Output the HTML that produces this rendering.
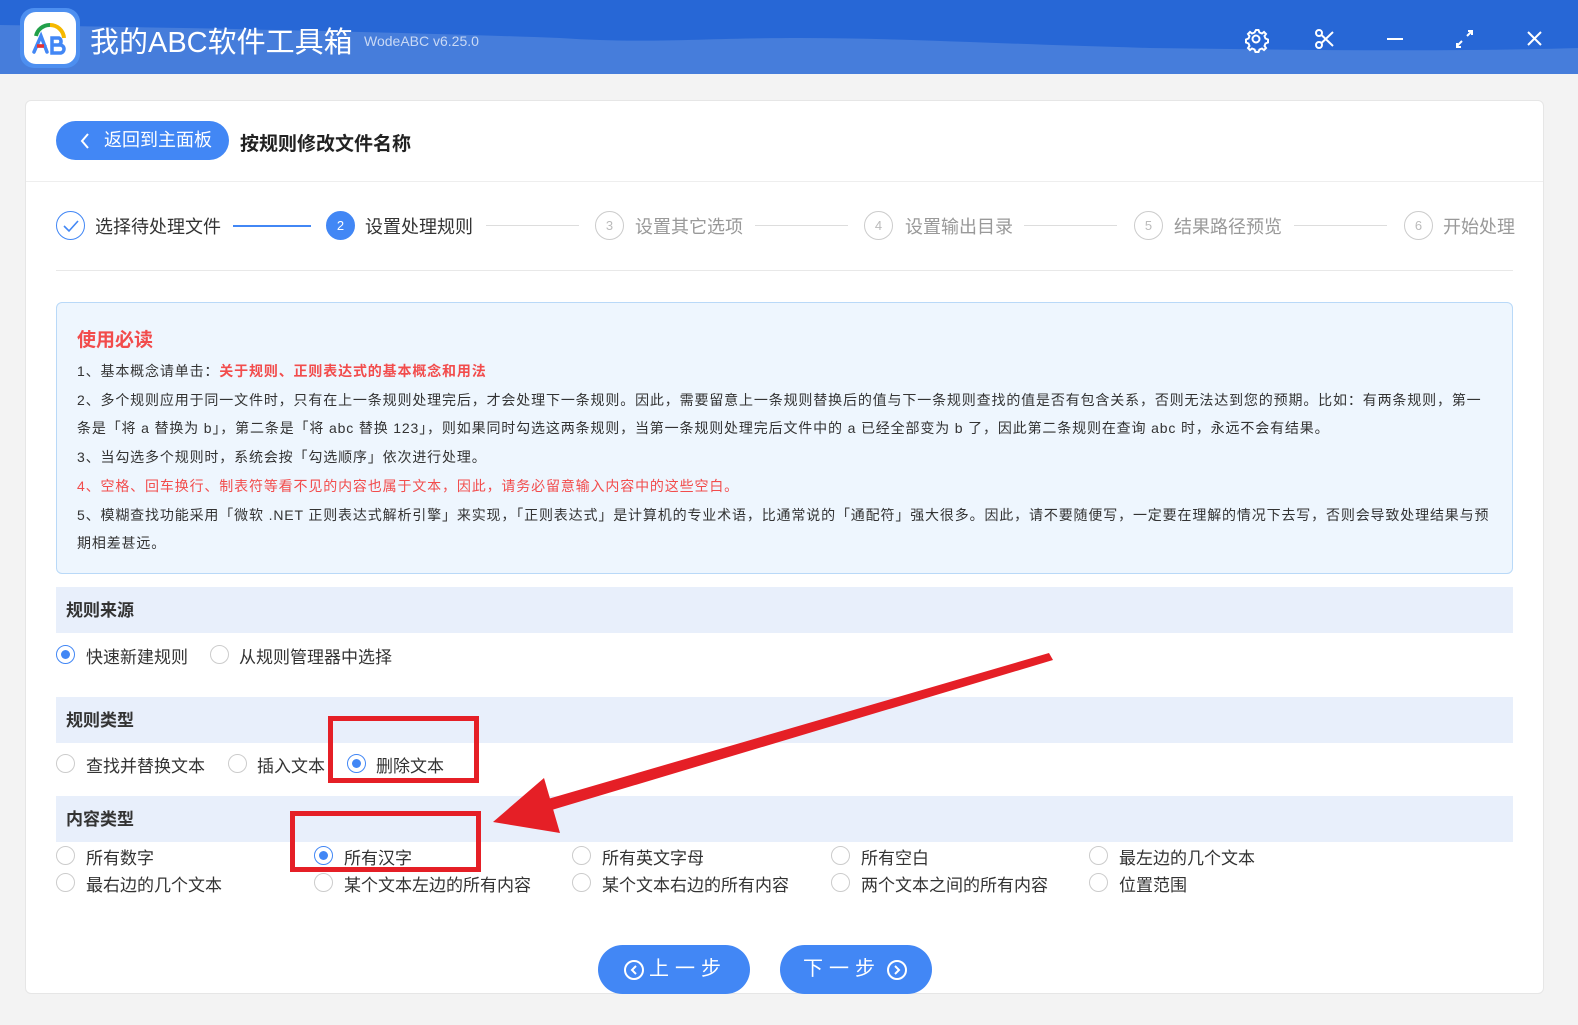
<!DOCTYPE html>
<html><head><meta charset="utf-8">
<style>
*{margin:0;padding:0;box-sizing:border-box}
body{width:1578px;height:1025px;background:#f3f3f3;font-family:"Liberation Sans","Noto Sans CJK SC",sans-serif;position:relative;overflow:hidden;color:#333}
.a{position:absolute;white-space:nowrap}
.card{position:absolute;left:25px;top:100px;width:1519px;height:894px;background:#fff;border:1px solid #e6e6e6;border-radius:6px}
.step{font-size:18px;color:#999}
.circ{position:absolute;width:29px;height:29px;border-radius:50%;border:1px solid #ccc;color:#bbb;font-size:13px;text-align:center;line-height:27px}
.note{position:absolute;left:56px;top:302px;width:1457px;height:272px;background:#eef6fe;border:1px solid #b9d9f8;border-radius:6px}
.nl{position:absolute;left:20px;font-size:14px;color:#333;white-space:nowrap;letter-spacing:0.85px}
.bar{position:absolute;left:56px;width:1457px;height:46px;background:#e8effb;font-size:17px;font-weight:bold;color:#333;padding-left:10px;line-height:48px}
.r{position:absolute;width:19px;height:19px;border-radius:50%;border:1px solid #ccc;background:#fff}
.r.on{border-color:#4287f5}
.r.on:after{content:"";position:absolute;left:4px;top:4px;width:9px;height:9px;border-radius:50%;background:#4287f5}
.rt{position:absolute;font-size:17px;color:#333;white-space:nowrap}
.btn{position:absolute;top:945px;height:49px;width:152px;border-radius:25px;background:#4287f5;color:#fff;font-size:20px;line-height:49px;text-align:center;letter-spacing:6px}
.box{position:absolute;border:5px solid #e51f26}
</style></head><body>
<svg class="a" style="left:0;top:0" width="1578" height="74">
<rect width="1578" height="74" fill="#467ddb"/>
<path d="M0 0 H1578 V48 C1450 52 1300 50 1150 48 C1000 44 900 38 800 38 C700 38 650 44 560 38 C400 32 200 28 0 25 Z" fill="#2767d6"/>
</svg>
<div class="a" style="left:20px;top:8px;width:60px;height:60px;border-radius:14px;background:#4d8ff0"></div>
<div class="a" style="left:24px;top:12px;width:52px;height:52px;border-radius:12px;background:#fff"></div>
<svg class="a" style="left:24px;top:12px" width="52" height="52" viewBox="0 0 52 52">
<path d="M12 24 A14 14 0 0 1 26 13" stroke="#22a04a" stroke-width="4" fill="none"/>
<path d="M26 13 A14 14 0 0 1 40 26" stroke="#f5b800" stroke-width="4" fill="none"/>
<path d="M10 40 L17 24 L23 40 M13 34 H21" stroke="#4287f5" stroke-width="3.5" fill="none" stroke-linecap="round"/>
<path d="M13 34 H20" stroke="#e8302f" stroke-width="3.5"/>
<path d="M28 26 H35 a4 4 0 0 1 0 7 H28 Z M28 33 H36 a4 4 0 0 1 0 8 H28 Z" stroke="#4287f5" stroke-width="3.5" fill="none"/>
</svg>
<div class="a" style="left:90px;top:19px;font-size:29px;color:#fff">我的ABC软件工具箱</div>
<div class="a" style="left:364px;top:33px;font-size:14px;color:#c9d9f5">WodeABC v6.25.0</div>
<svg class="a" style="left:1240px;top:24px" width="310" height="30" viewBox="0 0 310 30" fill="none" stroke="#fff" stroke-width="2">
<circle cx="16" cy="15" r="3.5"/><path d="M16 6 l2.5 0 1 2.5 2.5 1 2-1.5 2 2-1.5 2 1 2.5 2.5 1 0 3-2.5 1-1 2.5 1.5 2-2 2-2-1.5-2.5 1-1 2.5h-3l-1-2.5-2.5-1-2 1.5-2-2 1.5-2-1-2.5-2.5-1v-3l2.5-1 1-2.5-1.5-2 2-2 2 1.5 2.5-1z"/>
<circle cx="79" cy="21" r="3"/><circle cx="79" cy="9" r="3"/><path d="M81.5 19 L93 8 M81.5 11 L93 22"/>
<path d="M147 15 H163"/>
<path d="M217 22 l5-5 M227 12 l5-5 M228 7 h4 v4 M221 23 h-4 v-4"/>
<path d="M288 8 l13 13 M301 8 l-13 13"/>
</svg>
<div class="card"></div>
<div class="a" style="left:56px;top:121px;width:173px;height:39px;border-radius:20px;background:#4287f5;color:#fff;font-size:18px;line-height:39px;padding-left:48px">返回到主面板</div>
<svg class="a" style="left:79px;top:132px" width="12" height="18"><path d="M9 2 L3 9 L9 16" stroke="#fff" stroke-width="2" fill="none"/></svg>
<div class="a" style="left:240px;top:129px;font-size:19px;font-weight:bold;color:#222">按规则修改文件名称</div>
<div class="a" style="left:26px;top:181px;width:1517px;height:1px;background:#eee"></div>
<div class="circ" style="left:56px;top:211px;border-color:#4287f5"></div>
<svg class="a" style="left:62px;top:218px" width="18" height="16"><path d="M2 8 L7 13 L16 3" stroke="#4287f5" stroke-width="1.6" fill="none"/></svg>
<div class="a step" style="left:95px;top:213px;color:#333">选择待处理文件</div>
<div class="a" style="left:233px;top:225px;width:78px;height:2px;background:#4287f5"></div>
<div class="circ" style="left:326px;top:211px;background:#4287f5;border-color:#4287f5;color:#fff">2</div>
<div class="a step" style="left:365px;top:213px;color:#333">设置处理规则</div>
<div class="a" style="left:486px;top:225px;width:93px;height:1px;background:#ddd"></div>
<div class="circ" style="left:595px;top:211px">3</div>
<div class="a step" style="left:635px;top:213px">设置其它选项</div>
<div class="a" style="left:755px;top:225px;width:93px;height:1px;background:#ddd"></div>
<div class="circ" style="left:864px;top:211px">4</div>
<div class="a step" style="left:905px;top:213px">设置输出目录</div>
<div class="a" style="left:1024px;top:225px;width:93px;height:1px;background:#ddd"></div>
<div class="circ" style="left:1134px;top:211px">5</div>
<div class="a step" style="left:1174px;top:213px">结果路径预览</div>
<div class="a" style="left:1294px;top:225px;width:93px;height:1px;background:#ddd"></div>
<div class="circ" style="left:1404px;top:211px">6</div>
<div class="a step" style="left:1443px;top:213px">开始处理</div>
<div class="a" style="left:56px;top:270px;width:1457px;height:1px;background:#e8e8e8"></div>
<div class="note">
<div class="nl" style="top:22px;font-size:19px;font-weight:bold;color:#f24c4c;letter-spacing:0">使用必读</div>
<div class="nl" style="top:58px">1、基本概念请单击：<span style="color:#f24c4c;font-weight:bold">关于规则、正则表达式的基本概念和用法</span></div>
<div class="nl" style="top:87px">2、多个规则应用于同一文件时，只有在上一条规则处理完后，才会处理下一条规则。因此，需要留意上一条规则替换后的值与下一条规则查找的值是否有包含关系，否则无法达到您的预期。比如：有两条规则，第一</div>
<div class="nl" style="top:115px">条是「将 a 替换为 b」，第二条是「将 abc 替换 123」，则如果同时勾选这两条规则，当第一条规则处理完后文件中的 a 已经全部变为 b 了，因此第二条规则在查询 abc 时，永远不会有结果。</div>
<div class="nl" style="top:144px">3、当勾选多个规则时，系统会按「勾选顺序」依次进行处理。</div>
<div class="nl" style="top:173px;color:#f24c4c">4、空格、回车换行、制表符等看不见的内容也属于文本，因此，请务必留意输入内容中的这些空白。</div>
<div class="nl" style="top:202px">5、模糊查找功能采用「微软 .NET 正则表达式解析引擎」来实现，「正则表达式」是计算机的专业术语，比通常说的「通配符」强大很多。因此，请不要随便写，一定要在理解的情况下去写，否则会导致处理结果与预</div>
<div class="nl" style="top:230px">期相差甚远。</div>
</div>
<div class="bar" style="top:587px">规则来源</div>
<div class="r on" style="left:56px;top:645px"></div><div class="rt" style="left:86px;top:643px">快速新建规则</div>
<div class="r" style="left:210px;top:645px"></div><div class="rt" style="left:239px;top:643px">从规则管理器中选择</div>
<div class="bar" style="top:697px">规则类型</div>
<div class="r" style="left:56px;top:754px"></div><div class="rt" style="left:86px;top:752px">查找并替换文本</div>
<div class="r" style="left:228px;top:754px"></div><div class="rt" style="left:257px;top:752px">插入文本</div>
<div class="r on" style="left:347px;top:754px"></div><div class="rt" style="left:376px;top:752px">删除文本</div>
<div class="bar" style="top:796px">内容类型</div>
<div class="r" style="left:56px;top:846px"></div><div class="rt" style="left:86px;top:844px">所有数字</div>
<div class="r on" style="left:314px;top:846px"></div><div class="rt" style="left:344px;top:844px">所有汉字</div>
<div class="r" style="left:572px;top:846px"></div><div class="rt" style="left:602px;top:844px">所有英文字母</div>
<div class="r" style="left:831px;top:846px"></div><div class="rt" style="left:861px;top:844px">所有空白</div>
<div class="r" style="left:1089px;top:846px"></div><div class="rt" style="left:1119px;top:844px">最左边的几个文本</div>
<div class="r" style="left:56px;top:873px"></div><div class="rt" style="left:86px;top:871px">最右边的几个文本</div>
<div class="r" style="left:314px;top:873px"></div><div class="rt" style="left:344px;top:871px">某个文本左边的所有内容</div>
<div class="r" style="left:572px;top:873px"></div><div class="rt" style="left:602px;top:871px">某个文本右边的所有内容</div>
<div class="r" style="left:831px;top:873px"></div><div class="rt" style="left:861px;top:871px">两个文本之间的所有内容</div>
<div class="r" style="left:1089px;top:873px"></div><div class="rt" style="left:1119px;top:871px">位置范围</div>
<div class="box" style="left:328px;top:716px;width:151px;height:67px"></div>
<div class="box" style="left:290px;top:811px;width:191px;height:61px"></div>
<svg class="a" style="left:0;top:0" width="1578" height="1025">
<path d="M1049 653 L1053 660 L545 812 L541 801 Z" fill="#e51f26"/>
<path d="M493 822 L544 778 L560 833 Z" fill="#e51f26"/>
</svg>
<div class="btn" style="left:598px;padding-left:28px">上一步</div>
<div class="btn" style="left:780px;padding-right:28px">下一步</div>
<svg class="a" style="left:623px;top:959px" width="22" height="22"><circle cx="11" cy="11" r="9" stroke="#fff" stroke-width="2" fill="none"/><path d="M13 7 L9 11 L13 15" stroke="#fff" stroke-width="2" fill="none"/></svg>
<svg class="a" style="left:886px;top:959px" width="22" height="22"><circle cx="11" cy="11" r="9" stroke="#fff" stroke-width="2" fill="none"/><path d="M9 7 L13 11 L9 15" stroke="#fff" stroke-width="2" fill="none"/></svg>
</body></html>
